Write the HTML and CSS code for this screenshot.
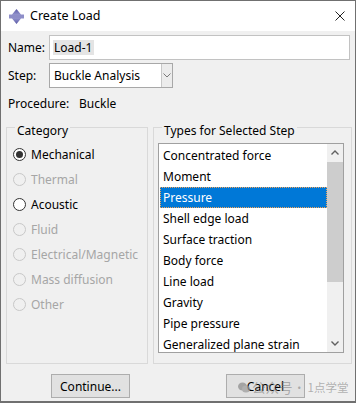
FILE: index.html
```html
<!DOCTYPE html>
<html>
<head>
<meta charset="utf-8">
<title>Create Load</title>
<link rel="stylesheet" href="styles.css">
</head>
<body>
<div class="window">
  <div class="titlebar">
    <svg class="app-icon" width="15" height="15" viewBox="0 0 15 15">
      <defs>
        <linearGradient id="ig" x1="0" y1="0" x2="0" y2="1">
          <stop offset="0" stop-color="#5a5aa6"/>
          <stop offset="0.5" stop-color="#a4a4d8"/>
          <stop offset="1" stop-color="#5a5aa6"/>
        </linearGradient>
      </defs>
      <path d="M7.5 0 L12 5.5 L15 5.5 L15 9.5 L12 9.5 L7.5 15 L3 9.5 L0 9.5 L0 5.5 L3 5.5 Z" fill="url(#ig)"/>
      <rect x="0" y="6" width="15" height="3" fill="#8e8ec8"/>
    </svg>
    <span class="title">Create Load</span>
    <svg class="close" width="10" height="10" viewBox="0 0 10 10">
      <path d="M0.5 0.5 L9.5 9.5 M9.5 0.5 L0.5 9.5" stroke="#222" stroke-width="1"/>
    </svg>
  </div>
  <div class="content">
    <div class="row name-row">
      <label class="lbl">Name:</label>
      <div class="textbox"><span class="sel-text">Load-1</span></div>
    </div>
    <div class="row step-row">
      <label class="lbl">Step:</label>
      <div class="combo">
        <span class="combo-text">Buckle Analysis</span>
        <span class="combo-btn">
          <svg width="8" height="5" viewBox="0 0 8 5"><path d="M0.5 0.5 L4 4 L7.5 0.5" fill="none" stroke="#7a7a7a" stroke-width="1"/></svg>
        </span>
      </div>
    </div>
    <div class="row proc-row">
      <span class="proc-lbl">Procedure:</span><span>Buckle</span>
    </div>
    <div class="groups">
      <fieldset class="group cat">
        <legend>Category</legend>
        <div class="radio checked"><span class="circle"></span>Mechanical</div>
        <div class="radio disabled"><span class="circle"></span>Thermal</div>
        <div class="radio"><span class="circle"></span>Acoustic</div>
        <div class="radio disabled"><span class="circle"></span>Fluid</div>
        <div class="radio disabled"><span class="circle"></span>Electrical/Magnetic</div>
        <div class="radio disabled"><span class="circle"></span>Mass diffusion</div>
        <div class="radio disabled"><span class="circle"></span>Other</div>
      </fieldset>
      <fieldset class="group types">
        <legend>Types for Selected Step</legend>
        <div class="listbox">
          <ul class="items">
            <li>Concentrated force</li>
            <li>Moment</li>
            <li class="selected">Pressure</li>
            <li>Shell edge load</li>
            <li>Surface traction</li>
            <li>Body force</li>
            <li>Line load</li>
            <li>Gravity</li>
            <li>Pipe pressure</li>
            <li>Generalized plane strain</li>
          </ul>
          <div class="vscroll">
            <span class="arrow">
              <svg width="8" height="5" viewBox="0 0 8 5"><path d="M0.5 4.5 L4 1 L7.5 4.5" fill="none" stroke="#606060" stroke-width="1.4"/></svg>
            </span>
            <div class="track"><div class="thumb"></div></div>
            <span class="arrow">
              <svg width="8" height="5" viewBox="0 0 8 5"><path d="M0.5 0.5 L4 4 L7.5 0.5" fill="none" stroke="#606060" stroke-width="1.4"/></svg>
            </span>
          </div>
        </div>
      </fieldset>
    </div>
    <div class="buttons">
      <button class="btn">Continue...</button>
      <button class="btn">Cancel</button>
    </div>
  </div>
  <div class="watermark">
    <svg width="12" height="11" viewBox="0 0 12 11">
      <ellipse cx="4.5" cy="4.5" rx="4.5" ry="4" fill="#8a8a8a"/>
      <ellipse cx="8" cy="7" rx="4" ry="3.5" fill="#9a9a9a"/>
    </svg>
    <span class="wm-big">公众号</span><span class="wm-small">· 1点学堂</span>
  </div>
</div>
</body>
</html>
```

FILE: styles.css
```css
html, body {
  margin: 0;
  padding: 0;
  background: #f0f0f0;
}
body {
  font-family: "Noto Sans", "Noto Sans CJK SC", sans-serif;
  font-size: 12px;
  color: #000;
}
.window {
  position: relative;
  width: 356px;
  height: 403px;
  box-sizing: border-box;
  border: 1px solid #707070;
  border-bottom-width: 2px;
  background: #f0f0f0;
  display: flex;
  flex-direction: column;
}
.titlebar {
  height: 30px;
  background: #fff;
  display: flex;
  align-items: center;
  padding-left: 8px;
  flex: none;
}
.app-icon {
  display: block;
  margin-top: 1px;
}
.title {
  margin-left: 6px;
  font-size: 12.5px;
  line-height: 16px;
}
.close {
  display: block;
  margin-left: auto;
  margin-right: 10px;
}
.content {
  padding-top: 4px;
  display: flex;
  flex-direction: column;
}
.row {
  display: flex;
  align-items: center;
  padding-left: 7px;
  padding-right: 5px;
}
.lbl {
  width: 41px;
  flex: none;
}
.name-row {
  height: 25px;
}
.textbox {
  flex: 1;
  height: 25px;
  box-sizing: border-box;
  border: 1px solid #c2c2c2;
  background: #fff;
  display: flex;
  align-items: center;
  padding-left: 3px;
}
.sel-text {
  background: #e4e4e4;
  padding: 0 2px 0 1px;
  line-height: 15px;
}
.step-row {
  height: 25px;
  margin-top: 3px;
}
.combo {
  width: 124px;
  height: 25px;
  box-sizing: border-box;
  border: 1px solid #a8a8a8;
  background: #fff;
  display: flex;
  align-items: center;
  padding-left: 4px;
}
.combo-text {
  flex: 1;
}
.combo-btn {
  width: 11px;
  height: 23px;
  box-sizing: border-box;
  border-left: 1px solid #c8c8c8;
  background: #ececec;
  display: flex;
  align-items: center;
  justify-content: center;
}
.combo-btn svg {
  display: block;
}
.proc-row {
  height: 18px;
  margin-top: 6px;
}
.proc-lbl {
  width: 71px;
}
.groups {
  display: flex;
  gap: 5px;
  padding-left: 5px;
  margin-top: 3px;
}
.group {
  margin: 0;
  border: 1px solid #d9d9d9;
  padding: 0;
  box-sizing: border-box;
  height: 249px;
}
.group legend {
  padding: 8px 2px 0;
  line-height: 16px;
}
.cat {
  width: 142px;
  padding-left: 6px;
}
.cat legend {
  margin-left: 2px;
}
.types {
  width: 199px;
  padding-left: 4px;
}
.types legend {
  margin-left: 4px;
}
.radio {
  height: 25px;
  display: flex;
  align-items: center;
}
.radio:first-of-type {
  margin-top: 3px;
}
.circle {
  width: 13px;
  height: 13px;
  box-sizing: border-box;
  border: 1px solid #333;
  border-radius: 50%;
  margin-right: 5px;
  display: flex;
  align-items: center;
  justify-content: center;
  background: #fff;
}
.checked .circle::after {
  content: "";
  width: 7px;
  height: 7px;
  border-radius: 50%;
  background: #333;
}
.disabled {
  color: #a6a6a6;
}
.disabled .circle {
  border-color: #c8c8c8;
  background: transparent;
}
.listbox {
  width: 186px;
  height: 210px;
  box-sizing: border-box;
  border: 1px solid #a0a0a0;
  background: #fff;
  display: flex;
  overflow: hidden;
  margin-top: 4px;
}
.items {
  list-style: none;
  margin: 0;
  padding: 1px 0 0 1px;
  flex: 1;
  overflow: hidden;
}
.items li {
  height: 21px;
  line-height: 21px;
  padding-left: 3px;
  white-space: nowrap;
}
.items li.selected {
  background: #0078d7;
  color: #fff;
  outline: 1px dotted #f2a45a;
  outline-offset: -1px;
}
.vscroll {
  width: 16px;
  flex: none;
  background: #f0f0f0;
  display: flex;
  flex-direction: column;
}
.arrow {
  height: 17px;
  display: flex;
  align-items: center;
  justify-content: center;
  flex: none;
}
.arrow svg {
  display: block;
}
.track {
  flex: 1;
  padding-top: 1px;
}
.thumb {
  height: 120px;
  background: #cdcdcd;
}
.buttons {
  display: flex;
  gap: 96px;
  padding-left: 50px;
  margin-top: 10px;
}
.btn {
  width: 79px;
  height: 24px;
  box-sizing: border-box;
  border: 1px solid #adadad;
  background: #e1e1e1;
  font-family: "Noto Sans", sans-serif;
  font-size: 12px;
  color: #000;
  padding: 0;
  margin: 0;
}
.watermark {
  position: absolute;
  left: 237px;
  top: 376px;
  display: flex;
  align-items: center;
  height: 20px;
  color: rgba(120, 120, 120, 0.55);
  font-family: "Noto Sans CJK SC", sans-serif;
  pointer-events: none;
}
.watermark svg {
  display: block;
  opacity: 0.7;
  margin-right: 2px;
}
.wm-big {
  font-size: 13.5px;
}
.wm-small {
  font-size: 11.5px;
  margin-left: 1px;
}
```
